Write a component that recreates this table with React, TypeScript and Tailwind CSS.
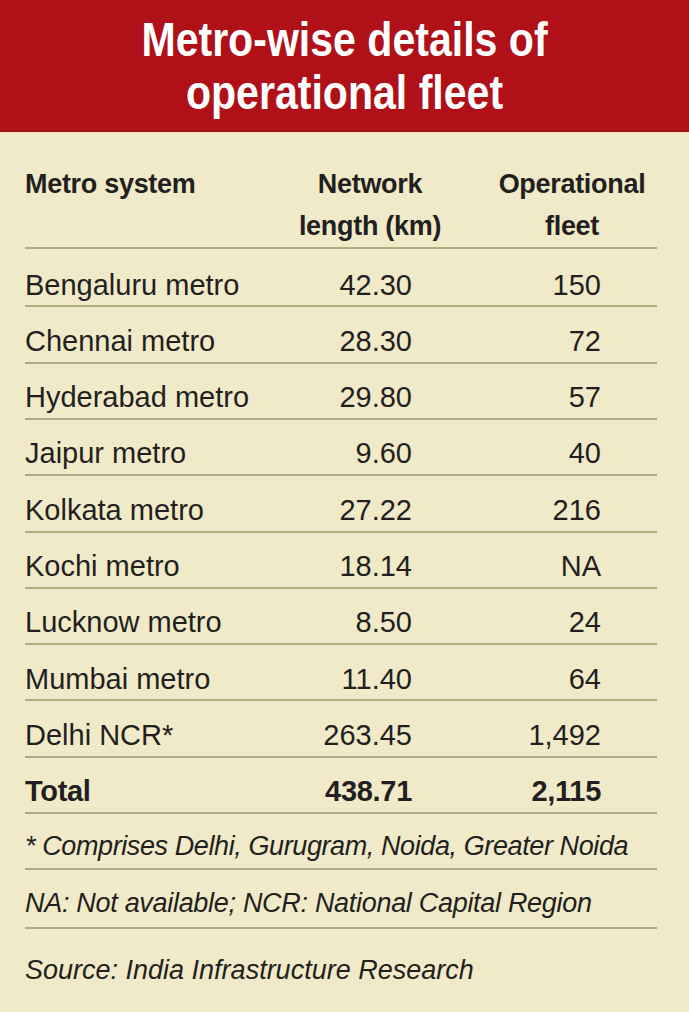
const rows = [
  { name: "Bengaluru metro", length: "42.30", fleet: "150" },
  { name: "Chennai metro", length: "28.30", fleet: "72" },
  { name: "Hyderabad metro", length: "29.80", fleet: "57" },
  { name: "Jaipur metro", length: "9.60", fleet: "40" },
  { name: "Kolkata metro", length: "27.22", fleet: "216" },
  { name: "Kochi metro", length: "18.14", fleet: "NA" },
  { name: "Lucknow metro", length: "8.50", fleet: "24" },
  { name: "Mumbai metro", length: "11.40", fleet: "64" },
  { name: "Delhi NCR*", length: "263.45", fleet: "1,492" },
]

const font = { fontFamily: '"Liberation Sans", Arial, sans-serif' }

function Row({ name, length, fleet, bold }: { name: string; length: string; fleet: string; bold?: boolean }) {
  return (
    <div
      className={`flex whitespace-nowrap border-b-2 border-[#b3ad80] pt-[18.5px] pb-[4.8px] text-[29px] leading-[31px] first:pt-[20.6px] ${bold ? "font-bold tracking-[-0.3px]" : ""}`}
    >
      <div className="w-[250px]">{name}</div>
      <div className="w-[190px] pr-[53px] text-right">{length}</div>
      <div className="w-[192px] pr-[56px] text-right">{fleet}</div>
    </div>
  )
}

export default function App() {
  return (
    <div className="min-h-[1012px] w-[689px] bg-[#f0eac8] text-[#231f20]" style={font}>
      <div className="h-[132px] border-b border-[#9c0d14] bg-[#b01018] pt-[13px] text-center text-[49px] font-bold leading-[53px] text-white">
        <div className="scale-x-[0.838] whitespace-nowrap">Metro-wise details of</div>
        <div className="scale-x-[0.838] whitespace-nowrap">operational fleet</div>
      </div>

      <div className="pl-[25px] pr-[32px]">
        <div className="flex whitespace-nowrap border-b-2 border-[#b3ad80] pt-[31px] text-[27px] font-bold leading-[42px] tracking-[-0.3px]">
          <div className="w-[250px]">Metro system</div>
          <div className="w-[190px] text-center">
            Network
            <br />
            length (km)
          </div>
          <div className="w-[192px] pl-[22px] text-center">
            Operational
            <br />
            fleet
          </div>
        </div>

        <div>
          {rows.map((r) => (
            <Row key={r.name} {...r} />
          ))}
          <Row name="Total" length="438.71" fleet="2,115" bold />
        </div>

        <div className="whitespace-nowrap text-[27px] italic leading-[31px]">
          <div className="border-b-2 border-[#b3ad80] pt-[17.2px] pb-[6.1px] tracking-[-0.4px]">
            * Comprises Delhi, Gurugram, Noida, Greater Noida
          </div>
          <div className="border-b-2 border-[#b3ad80] pt-[17.6px] pb-[8.1px] tracking-[-0.3px]">
            NA: Not available; NCR: National Capital Region
          </div>
          <div className="pt-[26.2px]">Source: India Infrastructure Research</div>
        </div>
      </div>
    </div>
  )
}
